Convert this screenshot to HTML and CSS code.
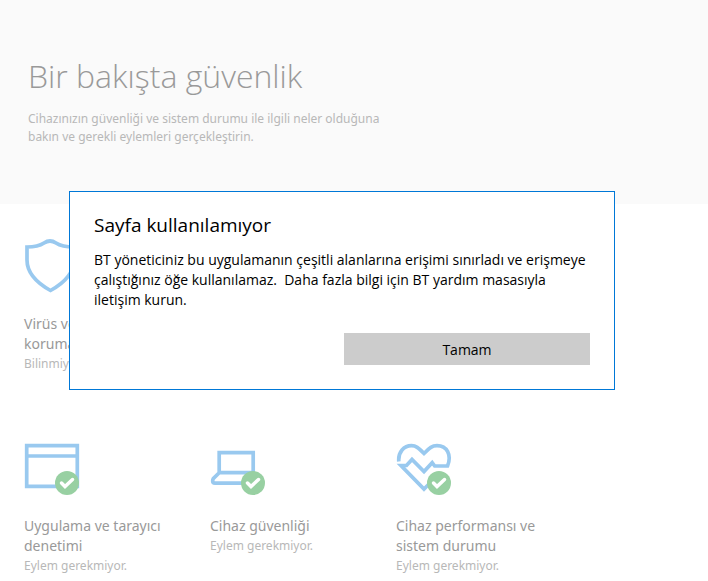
FILE: index.html
```html
<!DOCTYPE html>
<html lang="tr">
<head>
    <meta charset="UTF-8">
    <meta name="viewport" content="width=device-width, initial-scale=1.0">
    <title>Bir bakışta güvenlik</title>
    <link rel="stylesheet" href="styles.css">
</head>
<body>

<header class="page-header">
    <h1>Bir bakışta güvenlik</h1>
    <p>Cihazınızın güvenliği ve sistem durumu ile ilgili neler olduğuna bakın ve gerekli eylemleri gerçekleştirin.</p>
</header>

<main class="tiles">
    <div class="tile-row">
        <section class="tile">
            <svg class="icon" viewBox="0 0 56 56" aria-hidden="true">
                <path class="line" d="M3 9 C13 9 17 7 20 5 Q26 1 32 5 C35 7 39 9 50 9 V22 C50 36 40 45 26.500 52.500 C13 45 3 36 3 22 Z"/>
            </svg>
            <h2>Virüs ve tehdit koruması</h2>
            <p>Bilinmiyor.</p>
        </section>
    </div>

    <div class="tile-row">
        <section class="tile">
            <svg class="icon" viewBox="0 0 56 56" aria-hidden="true">
                <path class="line" d="M2.700 5.700 H53.300 V46.300 H2.700 Z M2.700 16 H53.300"/>
                <circle class="badge" cx="43" cy="43" r="12"/>
                <path class="check" d="M37.500 43 L41 46.500 L48.500 39.500"/>
            </svg>
            <h2>Uygulama ve tarayıcı denetimi</h2>
            <p>Eylem gerekmiyor.</p>
        </section>

        <section class="tile">
            <svg class="icon" viewBox="0 0 56 56" aria-hidden="true">
                <path class="line" d="M9.200 32.700 V12.700 H43.200 V32.700 Z M9.200 32.700 L3.200 38.700 Q2.700 39.500 2.700 41 Q2.700 43.200 5 43.200 H40"/>
                <circle class="badge" cx="43" cy="43" r="12"/>
                <path class="check" d="M37.500 43 L41 46.500 L48.500 39.500"/>
            </svg>
            <h2>Cihaz güvenliği</h2>
            <p>Eylem gerekmiyor.</p>
        </section>

        <section class="tile">
            <svg class="icon" viewBox="0 0 56 56" aria-hidden="true">
                <path class="line" d="M2.800 21.500 C2 12 8 5.700 15.500 5.700 C20 5.700 22 7.500 28 13.500 C34 7.500 36 5.700 41 5.700 C51 5.700 56 15 51.500 26 H38.700 L36.200 22.700 L28 31.500 L16 19.500 L10.500 25.500 H5 L28 49 L35 42"/>
                <circle class="badge" cx="43" cy="43" r="12"/>
                <path class="check" d="M37.500 43 L41 46.500 L48.500 39.500"/>
            </svg>
            <h2>Cihaz performansı ve sistem durumu</h2>
            <p>Eylem gerekmiyor.</p>
        </section>
    </div>
</main>

<div class="overlay">
    <div class="dialog" role="dialog" aria-modal="true" aria-labelledby="dialogTitle">
        <h2 id="dialogTitle">Sayfa kullanılamıyor</h2>
        <p>BT yöneticiniz bu uygulamanın çeşitli alanlarına erişimi sınırladı ve erişmeye çalıştığınız öğe kullanılamaz.&nbsp; Daha fazla bilgi için BT yardım masasıyla iletişim kurun.</p>
        <button type="button">Tamam</button>
    </div>
</div>

</body>
</html>
```
FILE: styles.css
```css
* {
    box-sizing: border-box;
}

body {
    margin: 0;
    background: #fff;
    font-family: "Noto Sans", "Open Sans", sans-serif;
    font-size: 14px;
    line-height: 20px;
    color: #000;
}

h1, h2, p {
    margin: 0;
    font-weight: 400;
}

.page-header {
    min-height: 204px;
    padding: 52px 28px 0;
    background: #fafafa;
}

.page-header h1, .dialog {
    font-family: "Open Sans", "Noto Sans", sans-serif;
}

.page-header h1 {
    font-size: 32px;
    font-weight: 300;
    line-height: 48px;
    color: #999;
}

.page-header p {
    max-width: 376px;
    margin-top: 10px;
    font-size: 12px;
    line-height: 18px;
    color: #b8b8b8;
}

.tiles {
    display: flex;
    flex-direction: column;
    gap: 66px;
    padding: 34px 24px 0;
}

.tile-row {
    display: grid;
    grid-template-columns: repeat(auto-fill, 150px);
    gap: 36px;
}

.icon {
    display: block;
    width: 56px;
    height: 56px;
    margin-bottom: 20px;
}

.line {
    fill: none;
    stroke: #99c9ef;
    stroke-width: 3.7;
}

.badge {
    fill: #98d0a2;
}

.check {
    fill: none;
    stroke: #fff;
    stroke-width: 3.5;
    stroke-linecap: round;
}

.tile h2 {
    font-size: 14px;
    color: #999;
}

.tile p {
    font-size: 12px;
    color: #b8b8b8;
}

.overlay {
    position: fixed;
    inset: 0;
    display: flex;
    justify-content: center;
    align-items: center;
    padding-right: 24px;
}

.dialog {
    display: flex;
    flex-direction: column;
    width: 80%;
    max-width: 546px;
    padding: 20px 24px 24px;
    background: #fff;
    border: 1px solid #0078d7;
}

.dialog h2 {
    font-size: 19px;
    line-height: 26px;
    margin-bottom: 12px;
}

.dialog button {
    width: calc(50% - 2px);
    height: 32px;
    margin-top: 23px;
    align-self: flex-end;
    border: none;
    background: #ccc;
    color: #000;
    font-family: inherit;
    font-size: 14px;
}
```
